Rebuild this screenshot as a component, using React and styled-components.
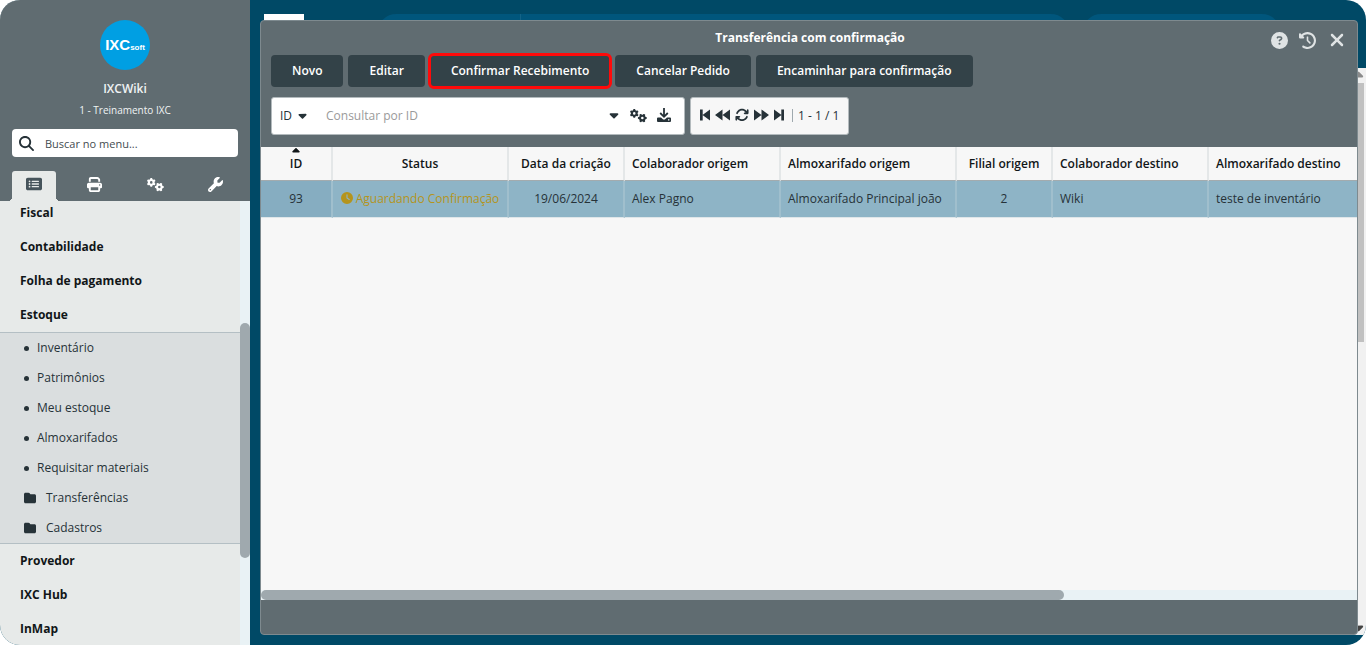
import React from 'react'
import styled, { createGlobalStyle, css } from 'styled-components'
import {
  FaArrowsRotate,
  FaCaretDown,
  FaCaretUp,
  FaCircleQuestion,
  FaClock,
  FaClockRotateLeft,
  FaFolder,
  FaGears,
  FaMagnifyingGlass,
  FaPrint,
  FaRectangleList,
  FaWrench,
  FaXmark,
} from 'react-icons/fa6'

const GlobalStyle = createGlobalStyle`
  * {
    box-sizing: border-box;
  }
  body {
    margin: 0;
    background: #fff;
    color: #263238;
    font-family: 'Open Sans', 'Noto Sans', sans-serif;
    font-size: 12px;
  }
  button, input, select {
    font: inherit;
    color: inherit;
  }
  button {
    border: 0;
    padding: 0;
    background: none;
    cursor: pointer;
  }
  a {
    color: inherit;
    text-decoration: none;
  }
`

const Page = styled.div`
  display: flex;
  height: 100vh;
  overflow: hidden;
  border-radius: 20px;
  background: #004966;
`

/* sidebar */

const Sidebar = styled.aside`
  display: flex;
  flex-direction: column;
  flex: none;
  width: 250px;
  background: #e7eae9;
`

const Profile = styled.div`
  display: flex;
  flex-direction: column;
  align-items: center;
  padding: 20px 12px 0;
  background: #606c71;
  color: #f0f3f4;
`

const Logo = styled.div`
  display: flex;
  align-items: baseline;
  justify-content: center;
  width: 50px;
  height: 50px;
  border-radius: 50%;
  background: #009fe3;
  color: #fff;
  font: bold 15px/50px 'Liberation Sans', sans-serif;
`

const LogoSmall = styled.span`
  font-size: 8px;
`

const UserName = styled.div`
  margin-top: 10px;
  line-height: 18px;
  font-weight: 600;
`

const Company = styled.div`
  margin-top: 4px;
  font-size: 10px;
  line-height: 16px;
`

const MenuSearch = styled.label`
  display: flex;
  align-items: center;
  gap: 11px;
  width: 100%;
  height: 28px;
  margin-top: 11px;
  padding: 0 7px;
  border-radius: 4px;
  background: #fff;
  color: #263238;
  svg {
    flex: none;
    width: 15px;
    height: 15px;
  }
  input {
    flex: 1;
    min-width: 0;
    padding: 0;
    border: 0;
    outline: 0;
    font-size: 11px;
  }
  input::placeholder {
    color: #444c50;
    opacity: 1;
  }
`

const Tabs = styled.div`
  display: flex;
  justify-content: space-between;
  width: 100%;
  margin-top: 14px;
`

const Tab = styled.button`
  position: relative;
  display: flex;
  align-items: center;
  justify-content: center;
  width: 44px;
  height: 30px;
  padding-bottom: 4px;
  border-radius: 3px 3px 0 0;
  color: #fff;
  font-size: ${({ $size }) => $size || 15}px;
  ${({ $active }) =>
    $active &&
    css`
      background: #e7eae9;
      color: #46545b;
      &::before,
      &::after {
        content: '';
        position: absolute;
        bottom: 0;
        width: 4px;
        height: 4px;
      }
      &::before {
        right: 100%;
        background: radial-gradient(circle at 0 0, transparent 4px, #e7eae9 4px);
      }
      &::after {
        left: 100%;
        background: radial-gradient(circle at 100% 0, transparent 4px, #e7eae9 4px);
      }
    `}
`

const MenuArea = styled.div`
  display: flex;
  flex: 1;
  min-height: 0;
`

const Menu = styled.nav`
  flex: 1;
  overflow: hidden;
`

const MenuList = styled.ul`
  margin: -5px 0 0;
  padding: 0;
  list-style: none;
`

const MenuLink = styled.a`
  display: block;
  padding: 0 20px;
  line-height: 34px;
  font-weight: bold;
  color: #111618;
`

const SubMenu = styled.ul`
  margin: 0;
  padding: 0;
  list-style: none;
  background: #dadedf;
  border-top: 1px solid #b4bfc4;
  border-bottom: 1px solid #b4bfc4;
`

const SubLink = styled.a`
  display: flex;
  align-items: center;
  gap: ${({ $folder }) => ($folder ? '10px' : '8px')};
  padding: 0 24px;
  line-height: 30px;
`

const Bullet = styled.span`
  width: 5px;
  height: 5px;
  border-radius: 50%;
  background: #263238;
`

const Track = styled.div`
  flex: none;
  width: 10px;
  background: #e9f2f5;
`

const Thumb = styled.div`
  height: 53%;
  margin-top: 122px;
  border-radius: 5px;
  background: #9fa9ae;
`

/* page behind the window */

const Main = styled.main`
  position: relative;
  display: flex;
  flex-direction: column;
  flex: 1;
  min-width: 0;
  padding-bottom: 10px;
`

const TopBar = styled.div`
  display: flex;
  flex: none;
  height: 68px;
  padding: 14px 86px 0 14px;
`

const TopLogo = styled.div`
  width: 40px;
  height: 40px;
  background: #fff;
`

const TopSearch = styled.div`
  flex: 1;
  height: 36px;
  margin-left: 74px;
  border-radius: 18px;
  background: #00567c;
  &::before {
    content: '';
    display: block;
    width: 142px;
    height: 100%;
    border-right: 1px solid #136387;
  }
`

const TopUser = styled.div`
  width: 197px;
  height: 36px;
  margin-left: 14px;
  border-radius: 18px;
  background: #00567c;
`

const PageScroll = styled.div`
  display: flex;
  flex-direction: column;
  align-items: center;
  flex: 1;
  align-self: flex-end;
  width: 15px;
  background: #f1f1f1;
  color: #8b8b8b;
  svg {
    width: 15px;
    height: 15px;
  }
  svg:last-child {
    color: #444;
  }
`

const PageThumb = styled.div`
  width: 11px;
  height: 259px;
  background: #c1c1c1;
`

const Spacer = styled.div`
  flex: 1;
`

/* window */

const Window = styled.section`
  position: absolute;
  inset: 20px 8px 10px 10px;
  display: flex;
  flex-direction: column;
  border: 1px solid #7e8a8f;
  border-radius: 4px;
  overflow: hidden;
  background: #606c71;
`

const TitleBar = styled.header`
  display: grid;
  grid-template-columns: 1fr auto 1fr;
  flex: none;
  height: 34px;
  padding: 0 10px 0 12px;
`

const Title = styled.h1`
  margin: 0;
  color: #fff;
  font-size: 12px;
  font-weight: bold;
  line-height: 34px;
`

const WindowActions = styled.div`
  display: flex;
  grid-column: 3;
  justify-content: flex-end;
  align-items: center;
  gap: 11px;
  padding-top: 4px;
`

const WindowButton = styled.button`
  display: flex;
  color: #dfe3e4;
  font-size: ${({ $size }) => $size || 17}px;
`

const ButtonRow = styled.div`
  display: flex;
  flex: none;
  gap: 5px;
  padding: 0 10px;
`

const ActionButton = styled.button`
  height: 32px;
  padding: 0 21px 2px;
  border-radius: 4px;
  background: #334248;
  color: #fff;
  font-weight: 600;
  ${({ $highlight }) =>
    $highlight &&
    css`
      outline: 3px solid #ff0a0a;
      outline-offset: -1px;
    `}
`

const FilterRow = styled.div`
  display: flex;
  flex: none;
  gap: 5px;
  padding: 10px 10px 12px;
`

const FilterBox = styled.div`
  display: flex;
  align-items: center;
  width: 414px;
  height: 38px;
  padding: 0 12px 2px 8px;
  border: 1px solid #b3babd;
  border-radius: 3px;
  background: #fff;
`

const FieldPicker = styled.label`
  display: flex;
  align-items: center;
  gap: 3px;
  font-weight: 500;
  select {
    padding: 0;
    border: 0;
    outline: 0;
    appearance: none;
    background: none;
  }
`

const FilterInput = styled.input`
  flex: 1;
  min-width: 0;
  margin-left: 17px;
  padding: 0;
  border: 0;
  outline: 0;
  &::placeholder {
    color: #9a9a9a;
    opacity: 1;
  }
`

const FilterActions = styled.div`
  display: flex;
  align-items: center;
  gap: 9px;
`

const IconButton = styled.button`
  display: flex;
  font-size: ${({ $size }) => $size || 14}px;
`

const Pager = styled.div`
  display: flex;
  align-items: center;
  gap: 5px;
  height: 38px;
  padding: 0 9px 2px;
  border: 1px solid #b3babd;
  border-radius: 3px;
  background: #f7f7f7;
`

const PageCount = styled.span`
  margin-left: 3px;
  padding-left: 5px;
  border-left: 1px solid #9fa9ae;
  line-height: 13px;
`

const Grid = styled.div`
  flex: 1;
  min-height: 0;
  overflow: hidden;
  background: #f7f7f7;
`

const Table = styled.table`
  width: 1123px;
  min-width: 100%;
  table-layout: fixed;
  border-collapse: separate;
  border-spacing: 0;
`

const HeadCell = styled.th`
  position: relative;
  width: ${({ $width }) => $width}px;
  height: 34px;
  padding: 0 7px;
  border-right: 2px solid #e4e7e8;
  border-bottom: 1px solid #a3abae;
  color: #111618;
  font-weight: 600;
  text-align: ${({ $align }) => $align || 'center'};
  white-space: nowrap;
`

const SortArrow = styled(FaCaretUp)`
  position: absolute;
  top: -2px;
  left: 50%;
  margin-left: -6px;
  width: 12px;
  height: 12px;
`

const Cell = styled.td`
  height: 37px;
  padding: 0 7px 2px;
  border-right: 2px solid #a0bfcd;
  border-bottom: 1px solid #dfe6e9;
  background: ${({ $sorted }) => ($sorted ? '#86adc1' : '#8eb4c6')};
  text-align: ${({ $align }) => $align || 'center'};
  white-space: nowrap;
`

const Status = styled.span`
  display: flex;
  align-items: center;
  justify-content: center;
  gap: 3px;
  color: #b5941c;
`

const GridScroll = styled.div`
  flex: none;
  height: 10px;
  background: #e9f2f5;
`

const GridThumb = styled.div`
  width: 73.3%;
  height: 10px;
  border-radius: 5px;
  background: #9fa9ae;
`

const WindowFooter = styled.footer`
  flex: none;
  height: 34px;
`

const submenu = ['Inventário', 'Patrimônios', 'Meu estoque', 'Almoxarifados', 'Requisitar materiais']
const folders = ['Transferências', 'Cadastros']

const columns = [
  { label: 'ID', width: 72, sorted: true, value: '93' },
  { label: 'Status', width: 176, status: true, value: 'Aguardando Confirmação' },
  { label: 'Data da criação', width: 116, value: '19/06/2024' },
  { label: 'Colaborador origem', width: 156, align: 'left', value: 'Alex Pagno' },
  { label: 'Almoxarifado origem', width: 176, align: 'left', value: 'Almoxarifado Principal joão' },
  { label: 'Filial origem', width: 96, value: '2' },
  { label: 'Colaborador destino', width: 156, align: 'left', value: 'Wiki' },
  { label: 'Almoxarifado destino', width: 175, align: 'left', value: 'teste de inventário' },
]

function StepIcon({ forward }) {
  return (
    <svg width="10" height="14" viewBox="0 0 10 14" fill="currentColor">
      <path d={forward ? 'M0 1.5 7.5 7 0 12.5zM7.3 1.5H10v11H7.3z' : 'M10 1.5 2.5 7 10 12.5zM0 1.5h2.7v11H0z'} />
    </svg>
  )
}

function SeekIcon({ forward }) {
  return (
    <svg width="15" height="14" viewBox="0 0 15 14" fill="currentColor">
      <path d={forward ? 'M0 1.5 7.5 7 0 12.5zM7.5 1.5 15 7 7.5 12.5z' : 'M7.5 1.5 0 7l7.5 5.5zM15 1.5 7.5 7 15 12.5z'} />
    </svg>
  )
}

function ExportIcon() {
  return (
    <svg width="16" height="16" viewBox="0 0 16 16" fill="none">
      <path d="M8 1v8.5M4.2 6 8 9.8 11.8 6" stroke="currentColor" strokeWidth="1.8" />
      <path
        fill="currentColor"
        fillRule="evenodd"
        d="M2 10.5h3l2.2 2h1.6l2.2-2h3a1 1 0 0 1 1 1V14a1 1 0 0 1-1 1H2a1 1 0 0 1-1-1v-2.500a1 1 0 0 1 1-1zM12 12.300v1.200h1.400v-1.200z"
      />
    </svg>
  )
}

function MenuItem({ children }) {
  return (
    <li>
      <MenuLink href="#">{children}</MenuLink>
    </li>
  )
}

function SideMenu() {
  return (
    <Sidebar>
      <Profile>
        <Logo>
          IXC<LogoSmall>soft</LogoSmall>
        </Logo>
        <UserName>IXCWiki</UserName>
        <Company>1 - Treinamento IXC</Company>
        <MenuSearch>
          <FaMagnifyingGlass />
          <input type="text" placeholder="Buscar no menu..." aria-label="Buscar no menu" />
        </MenuSearch>
        <Tabs>
          <Tab $active $size={16} aria-label="Menu"><FaRectangleList /></Tab>
          <Tab aria-label="Relatórios"><FaPrint /></Tab>
          <Tab $size={17} aria-label="Configurações"><FaGears /></Tab>
          <Tab aria-label="Ferramentas"><FaWrench /></Tab>
        </Tabs>
      </Profile>
      <MenuArea>
        <Menu>
          <MenuList>
            <MenuItem>Fiscal</MenuItem>
            <MenuItem>Contabilidade</MenuItem>
            <MenuItem>Folha de pagamento</MenuItem>
            <MenuItem>Estoque</MenuItem>
            <li>
              <SubMenu>
                {submenu.map((item) => (
                  <li key={item}>
                    <SubLink href="#"><Bullet />{item}</SubLink>
                  </li>
                ))}
                {folders.map((item) => (
                  <li key={item}>
                    <SubLink href="#" $folder><FaFolder />{item}</SubLink>
                  </li>
                ))}
              </SubMenu>
            </li>
            <MenuItem>Provedor</MenuItem>
            <MenuItem>IXC Hub</MenuItem>
            <MenuItem>InMap</MenuItem>
          </MenuList>
        </Menu>
        <Track>
          <Thumb />
        </Track>
      </MenuArea>
    </Sidebar>
  )
}

function TransferTable() {
  return (
    <Table>
      <thead>
        <tr>
          {columns.map((col) => (
            <HeadCell key={col.label} $width={col.width} $align={col.align}>
              {col.sorted && <SortArrow />}
              {col.label}
            </HeadCell>
          ))}
        </tr>
      </thead>
      <tbody>
        <tr>
          {columns.map((col) => (
            <Cell key={col.label} $align={col.align} $sorted={col.sorted}>
              {col.status ? <Status><FaClock />{col.value}</Status> : col.value}
            </Cell>
          ))}
        </tr>
      </tbody>
    </Table>
  )
}

function TransferWindow() {
  return (
    <Window>
      <TitleBar>
        <span />
        <Title>Transferência com confirmação</Title>
        <WindowActions>
          <WindowButton aria-label="Ajuda"><FaCircleQuestion /></WindowButton>
          <WindowButton aria-label="Histórico"><FaClockRotateLeft /></WindowButton>
          <WindowButton $size={20} aria-label="Fechar"><FaXmark /></WindowButton>
        </WindowActions>
      </TitleBar>
      <ButtonRow>
        <ActionButton>Novo</ActionButton>
        <ActionButton>Editar</ActionButton>
        <ActionButton $highlight>Confirmar Recebimento</ActionButton>
        <ActionButton>Cancelar Pedido</ActionButton>
        <ActionButton>Encaminhar para confirmação</ActionButton>
      </ButtonRow>
      <FilterRow>
        <FilterBox>
          <FieldPicker>
            <select aria-label="Campo">
              <option>ID</option>
            </select>
            <FaCaretDown size={13} />
          </FieldPicker>
          <FilterInput type="text" placeholder="Consultar por ID" aria-label="Consultar por ID" />
          <FilterActions>
            <IconButton aria-label="Operador"><FaCaretDown /></IconButton>
            <IconButton $size={17} aria-label="Configurar"><FaGears /></IconButton>
            <IconButton aria-label="Exportar"><ExportIcon /></IconButton>
          </FilterActions>
        </FilterBox>
        <Pager>
          <IconButton aria-label="Primeira"><StepIcon /></IconButton>
          <IconButton aria-label="Anterior"><SeekIcon /></IconButton>
          <IconButton aria-label="Atualizar"><FaArrowsRotate /></IconButton>
          <IconButton aria-label="Próxima"><SeekIcon forward /></IconButton>
          <IconButton aria-label="Última"><StepIcon forward /></IconButton>
          <PageCount>1 - 1 / 1</PageCount>
        </Pager>
      </FilterRow>
      <Grid>
        <TransferTable />
      </Grid>
      <GridScroll>
        <GridThumb />
      </GridScroll>
      <WindowFooter />
    </Window>
  )
}

function App() {
  return (
    <>
      <GlobalStyle />
      <Page>
        <SideMenu />
        <Main>
          <TopBar>
            <TopLogo />
            <TopSearch />
            <TopUser />
          </TopBar>
          <PageScroll>
            <FaCaretUp />
            <PageThumb />
            <Spacer />
            <FaCaretDown />
          </PageScroll>
          <TransferWindow />
        </Main>
      </Page>
    </>
  )
}

export default App
